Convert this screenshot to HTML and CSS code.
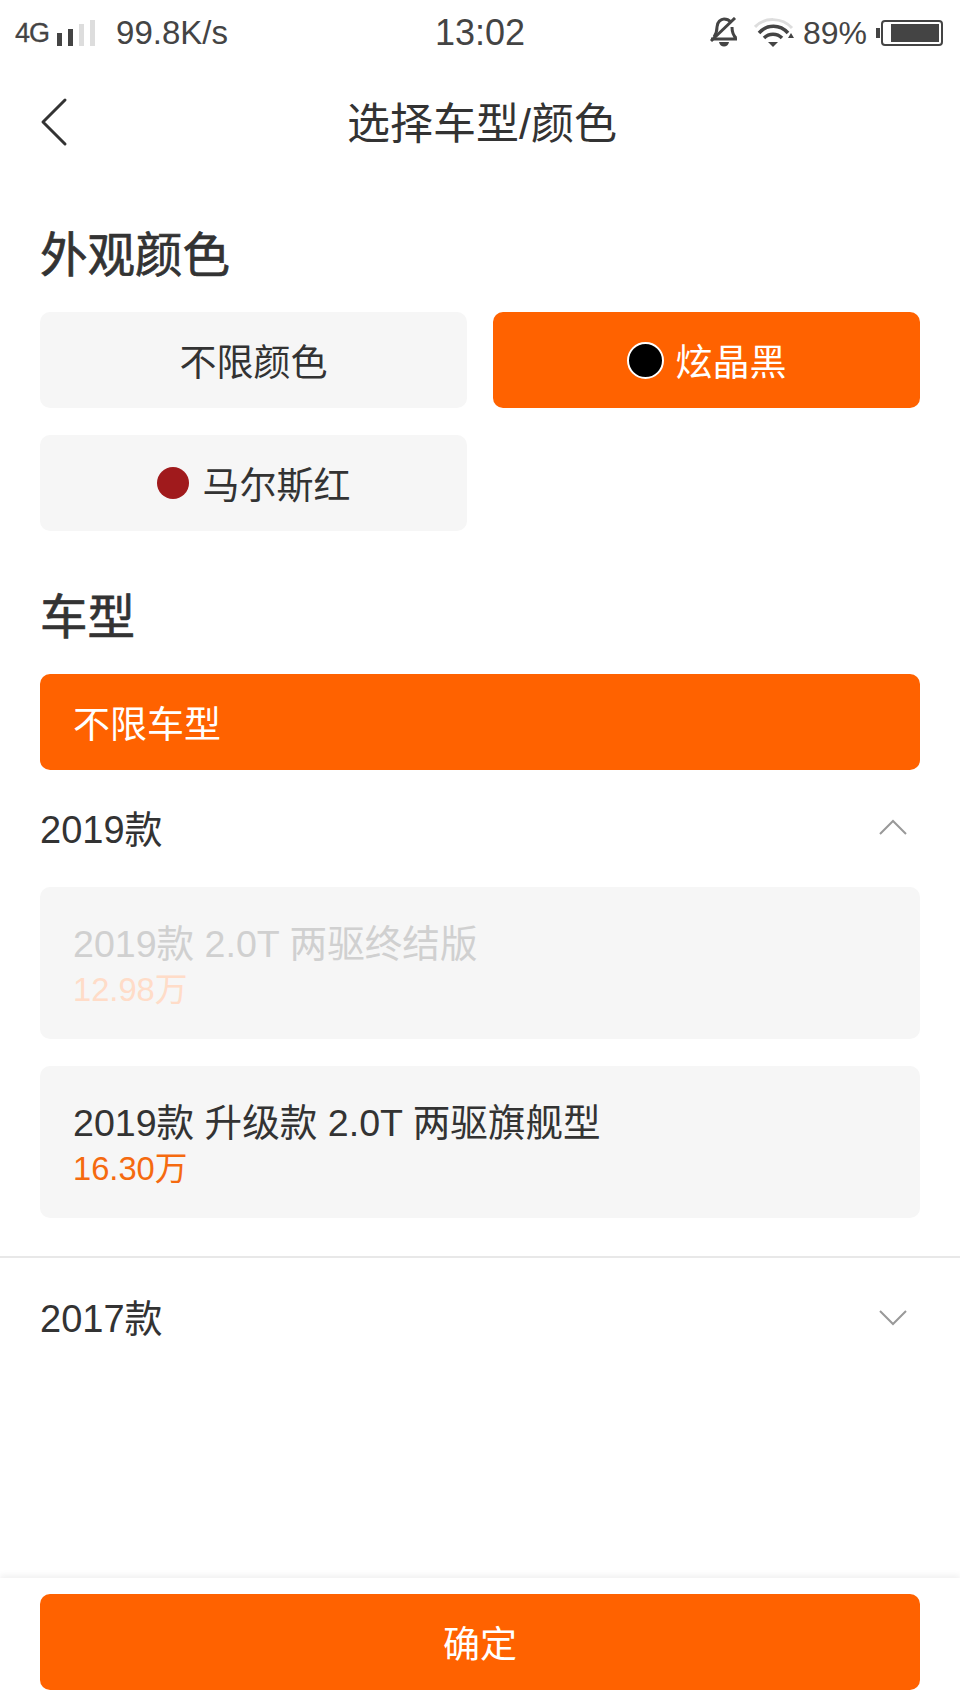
FILE: index.html
```html
<!DOCTYPE html>
<html lang="zh-CN">
<head>
    <meta charset="UTF-8">
    <meta name="viewport" content="width=device-width, initial-scale=1.0">
    <title>选择车型/颜色</title>
    <link rel="stylesheet" href="styles.css">
</head>
<body>
    <div class="page">
        <div class="statusbar">
            <div class="status-left">
                <span class="net">4G</span>
                <svg class="signal" width="38" height="28" viewBox="0 0 38 28">
                    <rect x="0" y="14" width="5" height="13" fill="#444"/>
                    <rect x="11" y="10" width="5" height="17" fill="#444"/>
                    <rect x="22" y="5" width="5" height="22" fill="#ddd"/>
                    <rect x="33" y="1" width="5" height="26" fill="#ddd"/>
                </svg>
                <span class="speed">99.8K/s</span>
            </div>
            <div class="status-time">13:02</div>
            <div class="status-right">
                <svg class="bell" width="30" height="32" viewBox="0 0 30 32">
                    <path d="M5 20 C7 17 8 14 8 10 C8 5 12 2 15 2 C18 2 20 3 22 5 M23 10 C23 14 24 18 27 21 M2 22 H28" fill="none" stroke="#444" stroke-width="3"/>
                    <path d="M10 25 H20 C19 31 11 31 10 25 Z" fill="#444"/>
                    <path d="M2 24 L26 1" stroke="#444" stroke-width="3"/>
                </svg>
                <svg class="wifi" width="42" height="30" viewBox="0 0 42 30">
                    <path d="M1 9 C10 -1 28 -1 38 10" fill="none" stroke="#ddd" stroke-width="3"/>
                    <path d="M5 15 C13 6 26 6 34 15" fill="none" stroke="#444" stroke-width="3.500"/>
                    <path d="M10 20 C15 15 23 15 28 20" fill="none" stroke="#444" stroke-width="3.500"/>
                    <path d="M14 24 H24 L19 29 Z" fill="#444"/>
                    <path d="M34 20 L37 15 L40 20 Z" fill="#444"/>
                </svg>
                <span class="pct">89%</span>
                <div class="battery-wrap">
                    <span class="battery-cap"></span>
                    <div class="battery"><span class="battery-fill"></span></div>
                </div>
            </div>
        </div>

        <div class="navbar">
            <svg class="back" width="30" height="50" viewBox="0 0 30 50">
                <path d="M26 3 L4 25 L26 47" fill="none" stroke="#333" stroke-width="3" stroke-linecap="round" stroke-linejoin="round"/>
            </svg>
            <div class="nav-title">选择车型/颜色</div>
        </div>

        <div class="section">
            <h2 class="section-title">外观颜色</h2>
            <div class="color-grid">
                <div class="opt">不限颜色</div>
                <div class="opt active"><span class="dot dot-black"></span>炫晶黑</div>
                <div class="opt"><span class="dot dot-red"></span>马尔斯红</div>
            </div>
        </div>

        <div class="section">
            <h2 class="section-title section-title-model">车型</h2>
            <div class="opt active opt-left">不限车型</div>

            <div class="year-row">
                <span>2019款</span>
                <svg class="chev" width="30" height="18" viewBox="0 0 30 18">
                    <path d="M2 16 L15 3 L28 16" fill="none" stroke="#999" stroke-width="2"/>
                </svg>
            </div>
            <div class="trim disabled">
                <div class="trim-name">2019款 2.0T 两驱终结版</div>
                <div class="trim-price">12.98万</div>
            </div>
            <div class="trim">
                <div class="trim-name">2019款 升级款 2.0T 两驱旗舰型</div>
                <div class="trim-price">16.30万</div>
            </div>
        </div>

        <div class="year-row year-closed">
            <span>2017款</span>
            <svg class="chev chev-closed" width="30" height="18" viewBox="0 0 30 18">
                <path d="M2 2 L15 15 L28 2" fill="none" stroke="#999" stroke-width="2"/>
            </svg>
        </div>

        <div class="footer">
            <div class="confirm">确定</div>
        </div>
    </div>
</body>
</html>
```

FILE: styles.css
```css
* {
    box-sizing: border-box;
}

body {
    margin: 0;
    background: #fff;
    color: #333;
    font-family: "Liberation Sans", "Noto Sans CJK SC", sans-serif;
}

.page {
    width: 960px;
    height: 1706px;
    display: flex;
    flex-direction: column;
    overflow: hidden;
}

/* status bar */
.statusbar {
    height: 66px;
    padding: 0 17px 0 15px;
    display: flex;
    align-items: center;
    justify-content: space-between;
    color: #444;
    position: relative;
}

.status-left, .status-right {
    display: flex;
    align-items: center;
}

.net {
    font-size: 27px;
    letter-spacing: -1px;
    -webkit-text-stroke: 0.3px #444;
}

.signal {
    margin-left: 8px;
}

.speed {
    font-size: 33px;
    margin-left: 21px;
}

.status-time {
    font-size: 36px;
    position: absolute;
    left: 435px;
}

.bell {
    margin-right: 15px;
}

.wifi {
    margin-right: 7px;
}

.pct {
    font-size: 32px;
}

.battery-wrap {
    display: flex;
    align-items: center;
    margin-left: 9px;
}

.battery-cap {
    width: 4px;
    height: 10px;
    background: #444;
}

.battery {
    width: 62px;
    height: 26px;
    margin-left: 1px;
    border: 2px solid #444;
    border-radius: 4px;
    padding: 2px 2px 2px 8px;
    display: flex;
}

.battery-fill {
    flex: 1;
    background: #444;
}

/* nav */
.navbar {
    height: 116px;
    padding-bottom: 8px;
    position: relative;
    display: flex;
    align-items: center;
    justify-content: center;
}

.back {
    position: absolute;
    left: 39px;
    top: 31px;
}

.nav-title {
    font-size: 43px;
    padding-left: 4px;
}

/* sections */
.section {
    padding: 0 40px;
}

.section-title {
    margin: 0;
    height: 130px;
    padding-top: 38px;
    line-height: 72px;
    font-size: 47.500px;
    font-weight: 400;
    -webkit-text-stroke: 0.7px #333;
}

.section-title-model {
    height: 143px;
    padding-top: 51px;
}

.color-grid {
    display: grid;
    grid-template-columns: 1fr 1fr;
    gap: 27px 26px;
}

.opt {
    height: 96px;
    border-radius: 10px;
    background: #f6f6f6;
    display: flex;
    align-items: center;
    justify-content: center;
    font-size: 37px;
}

.opt.active {
    background: #ff6200;
    color: #fff;
}

.opt-left {
    justify-content: flex-start;
    padding-left: 33px;
}

.dot {
    width: 32px;
    height: 32px;
    border-radius: 50%;
    margin-right: 14px;
}

.dot-black {
    width: 37px;
    height: 37px;
    background: #000;
    border: 2px solid #fff;
    margin-right: 12px;
}

.dot-red {
    background: #a01a1c;
}

/* years and trims */
.year-row {
    height: 117px;
    padding: 0 12px 4px 0;
    display: flex;
    align-items: center;
    justify-content: space-between;
    font-size: 38px;
}

.trim {
    height: 152px;
    border-radius: 10px;
    background: #f6f6f6;
    padding: 33px 33px 0;
    margin-bottom: 27px;
    font-size: 37.600px;
}

.trim-name {
    line-height: 48px;
}

.trim-price {
    font-size: 32.700px;
    line-height: 43px;
    color: #f56a0f;
}

.trim.disabled .trim-name {
    color: #d0d0d0;
}

.trim.disabled .trim-price {
    color: #ffdcc8;
}

.year-closed {
    margin-top: 11px;
    border-top: 2px solid #e8e8e8;
    padding: 0 52px 8px 40px;
    height: 124px;
}

.chev-closed {
    margin-top: 6px;
}

/* bottom */
.footer {
    margin-top: auto;
    height: 128px;
    padding: 16px 40px 0;
    box-shadow: 0 -3px 6px rgba(0, 0, 0, 0.06);
}

.confirm {
    height: 96px;
    border-radius: 10px;
    background: #ff6200;
    color: #fff;
    display: flex;
    align-items: center;
    justify-content: center;
    font-size: 37px;
}
```
